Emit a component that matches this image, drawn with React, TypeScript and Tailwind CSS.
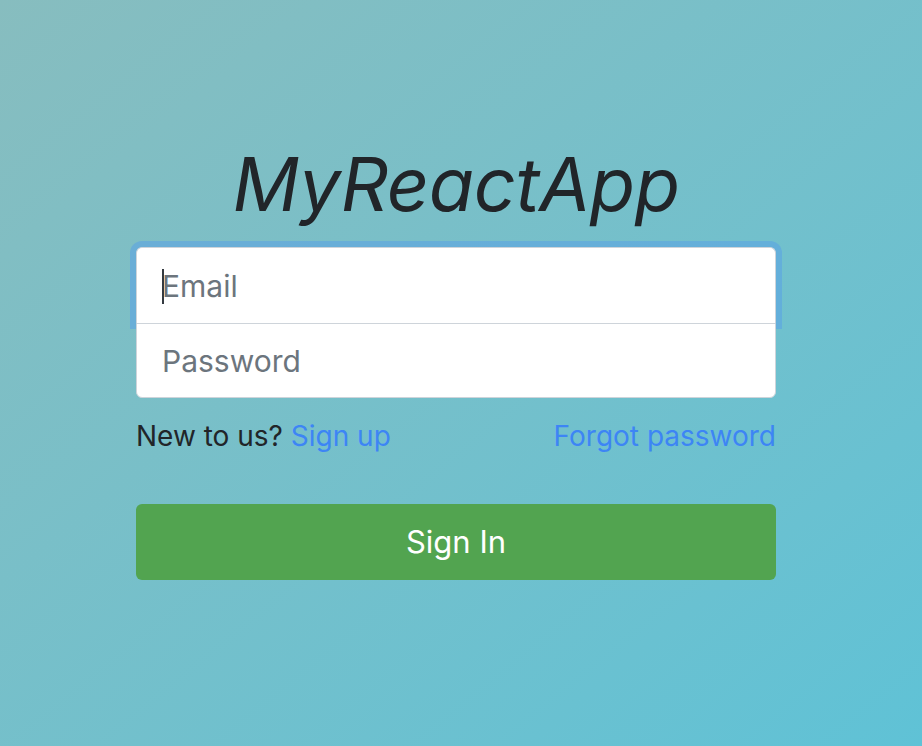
import React from "react";

export default function App() {
    return (
        <div
            className="w-full h-[746px] pr-[10px] flex flex-col items-center bg-gradient-to-br from-[#87bdbf] to-[#5fc2d6]"
            style={{ fontFamily: "Inter, 'Noto Sans', sans-serif" }}
        >
            <h1 className="mt-[139px] text-[74px] leading-[90px] italic text-[#212529] tracking-[-0.5px]">
                MyReactApp
            </h1>
            <form className="w-[640px] mt-[18px] flex flex-col" onSubmit={e => e.preventDefault()}>
                <div className="flex flex-col">
                    <div className="relative h-[76px] rounded-t-[6px] border border-[#ced4da] border-b-0 bg-white shadow-[0_0_0_6px_rgba(90,160,230,0.55)]">
                        <input
                            type="email"
                            placeholder="Email"
                            className="w-full h-full rounded-t-[6px] px-[25px] text-[30px] text-[#495057] placeholder:text-[#6c757d] outline-none bg-transparent"
                        />
                        <span className="absolute left-[25px] top-[21px] w-[2px] h-[35px] bg-[#343a40]" />
                    </div>
                    <div className="relative z-10 h-[75px] rounded-b-[6px] border border-[#ced4da] bg-white">
                        <input
                            type="password"
                            placeholder="Password"
                            className="w-full h-full rounded-b-[6px] px-[25px] text-[30px] text-[#495057] placeholder:text-[#6c757d] outline-none bg-transparent"
                        />
                    </div>
                </div>
                <div className="mt-[18px] flex justify-between items-center text-[28px] leading-[40px]">
                    <p className="text-[#212529]">
                        New to us? <a className="text-[#3d85f5]" href="#">Sign up</a>
                    </p>
                    <a className="text-[#3d85f5]" href="#">
                        Forgot password
                    </a>
                </div>
                <button
                    type="submit"
                    className="mt-[48px] h-[76px] w-full rounded-[6px] bg-[#52a450] text-white text-[31px]"
                >
                    Sign In
                </button>
            </form>
        </div>
    );
}
